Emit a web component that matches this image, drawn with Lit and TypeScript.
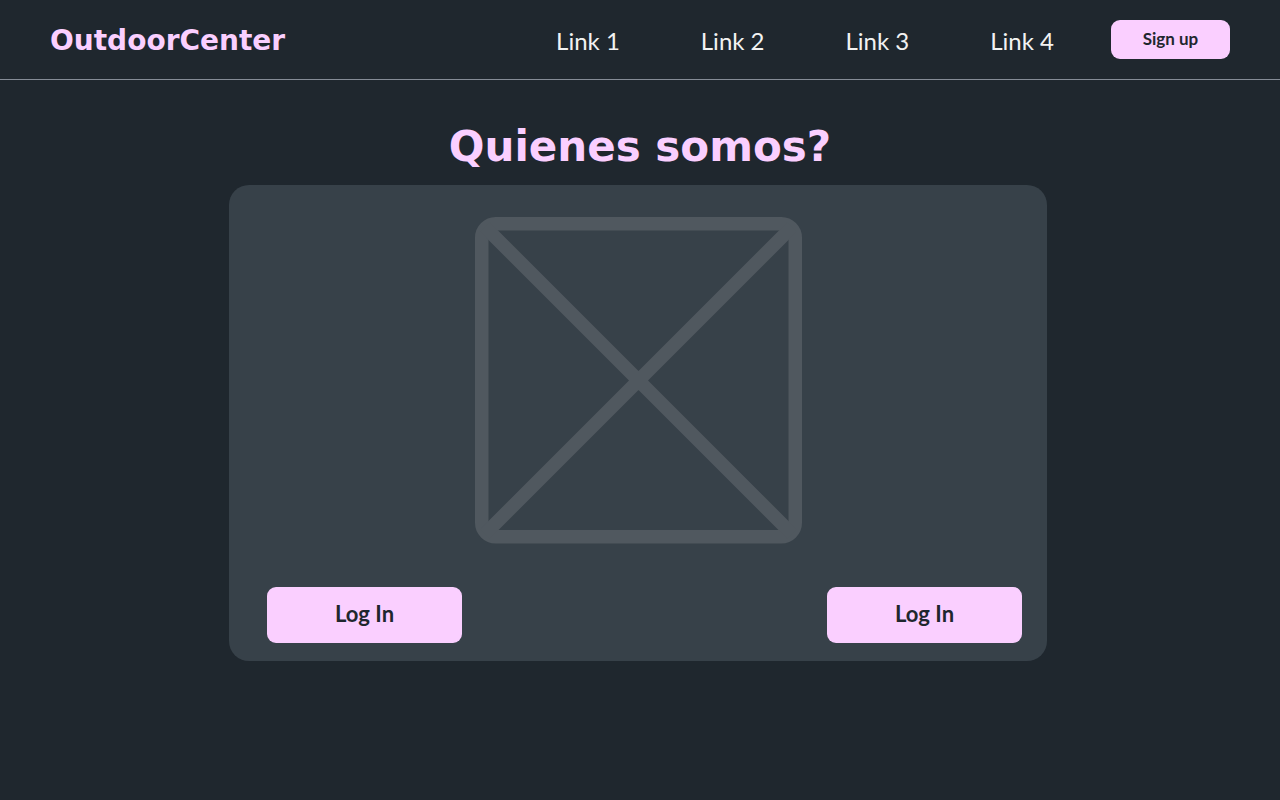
import { LitElement, html, css } from "lit";
import { customElement } from "lit/decorators.js";

@customElement("app-root")
export class AppRoot extends LitElement {
  static styles = css`
    :host {
      display: block;
      min-height: 100vh;
      background: #1f272e;
      color: #f2f2f2;
      font-family: Lato, "Open Sans", sans-serif;
    }
    * {
      box-sizing: border-box;
    }
    .bar {
      display: flex;
      align-items: center;
      justify-content: space-between;
      height: 80px;
      padding: 0 50px;
      border-bottom: 1px solid #858c96;
    }
    .brand,
    .title {
      font-family: "DejaVu Sans", sans-serif;
      font-weight: 700;
      color: #facfff;
      text-decoration: none;
      white-space: nowrap;
    }
    .brand {
      padding-top: 2px;
      font-size: 28px;
      line-height: 32px;
    }
    .nav {
      display: flex;
      align-items: center;
      gap: 57px;
    }
    .links {
      display: flex;
      gap: 81px;
      margin: 0;
      padding: 2px 0 0;
      list-style: none;
    }
    .link {
      color: inherit;
      font-size: 24px;
      line-height: 32px;
      text-decoration: none;
      white-space: nowrap;
    }
    .button {
      border: 0;
      border-radius: 9px;
      padding: 0 0 2px;
      background: #facfff;
      color: #1f272e;
      font-family: inherit;
      font-weight: 700;
      cursor: pointer;
    }
    .small {
      width: 119px;
      height: 39px;
      font-size: 17px;
    }
    .large {
      width: 195px;
      height: 56px;
      padding-bottom: 4px;
      font-size: 22px;
    }
    .title {
      margin: 0;
      padding: 41px 0 12px;
      font-size: 42px;
      line-height: 52px;
      text-align: center;
    }
    .card {
      display: flex;
      flex-direction: column;
      gap: 43px;
      margin: 0 233px 0 229px;
      padding: 32px 25px 18px 38px;
      border-radius: 20px;
      background: #374149;
    }
    .picture {
      display: block;
      width: 327px;
      height: 327px;
      align-self: center;
      margin-right: 13px;
    }
    .actions {
      display: flex;
      justify-content: space-between;
    }
  `;

  render() {
    return html`
      <header class="bar">
        <a class="brand" href="#">OutdoorCenter</a>
        <nav class="nav">
          <ul class="links">
            ${[1, 2, 3, 4].map(
              (n) => html`<li><a class="link" href="#link-${n}">Link ${n}</a></li>`
            )}
          </ul>
          <button class="button small" type="button">Sign up</button>
        </nav>
      </header>
      <main>
        <h1 class="title">Quienes somos?</h1>
        <section class="card">
          <svg class="picture" viewBox="0 0 327 327" aria-hidden="true">
            <g fill="none" stroke="#50585f" stroke-width="13.5">
              <rect x="6.75" y="6.75" width="313.5" height="313" rx="14" />
              <path d="M10 10 L317 317 M317 10 L10 317" />
            </g>
          </svg>
          <div class="actions">
            <button class="button large" type="button">Log In</button>
            <button class="button large" type="button">Log In</button>
          </div>
        </section>
      </main>
    `;
  }
}
